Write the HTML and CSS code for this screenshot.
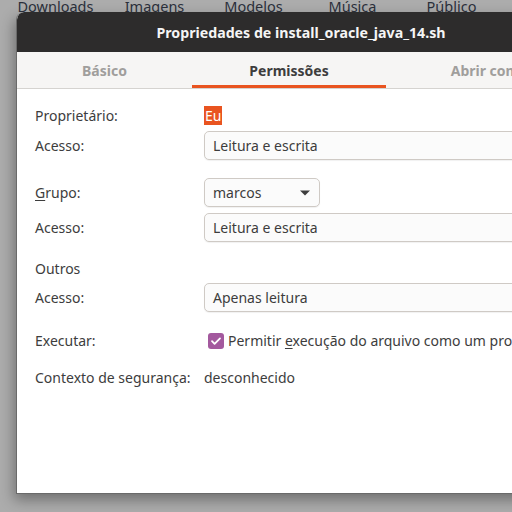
FILE: index.html
```html
<!DOCTYPE html>
<html>
<head>
<meta charset="utf-8">
<link rel="stylesheet" href="styles.css">
</head>
<body>
<div class="desktop">
  <div class="icons">
    <span>Downloads</span><span>Imagens</span><span>Modelos</span><span>Música</span><span>Público</span>
  </div>
  <div class="dialog">
    <div class="header">Propriedades de install_oracle_java_14.sh</div>
    <div class="tabs">
      <div class="tab t1">Básico</div>
      <div class="tab t2 active">Permissões</div>
      <div class="tab t3">Abrir com</div>
    </div>
    <div class="content">
      <div class="row r1"><div class="label">Proprietário:</div><div class="value"><span class="eu">Eu</span></div></div>
      <div class="row r2"><div class="label">Acesso:</div><div class="combo wide">Leitura e escrita</div></div>
      <div class="row r3"><div class="label"><u>G</u>rupo:</div><div class="combo small"><span>marcos</span><svg width="12" height="8" viewBox="0 0 12 8"><path d="M1 1.5h10L6 6.5z" fill="#3d3d3d"/></svg></div></div>
      <div class="row r4"><div class="label">Acesso:</div><div class="combo wide">Leitura e escrita</div></div>
      <div class="row r5"><div class="label">Outros</div></div>
      <div class="row r6"><div class="label">Acesso:</div><div class="combo wide">Apenas leitura</div></div>
      <div class="row r7"><div class="label">Executar:</div><div class="value check-row"><span class="check"><svg width="16" height="16" viewBox="0 0 16 16"><path d="M4 8.2l2.6 2.6L12 5.4" fill="none" stroke="#fff" stroke-width="1.8" stroke-linecap="round" stroke-linejoin="round"/></svg></span><span class="ctext">Permitir <u>e</u>xecução do arquivo como um programa</span></div></div>
      <div class="row r8"><div class="label">Contexto de segurança:</div><div class="value">desconhecido</div></div>
    </div>
  </div>
</div>
</body>
</html>
```
FILE: styles.css
```css
html, body {
  margin: 0;
  padding: 0;
  width: 512px;
  height: 512px;
  overflow: hidden;
  background: #acacac;
  font-family: "Noto Sans", "Open Sans", sans-serif;
}
.desktop {
  width: 512px;
  height: 512px;
  overflow: hidden;
}
.icons {
  display: grid;
  grid-template-columns: repeat(5, 99px);
  padding-left: 6px;
  height: 12px;
  overflow: hidden;
  font-size: 14.5px;
  color: #2a2f3a;
}
.icons span {
  text-align: center;
  line-height: 14px;
  margin-top: -1px;
  white-space: nowrap;
}
.dialog {
  margin-left: 16px;
  width: 568px;
  height: 481px;
  background: #fff;
  border-left: 1px solid #6a6a6a;
  border-bottom: 1px solid #6a6a6a;
  border-radius: 8px 8px 0 0;
  box-shadow: -2px 6px 14px rgba(0,0,0,0.35);
  color: #3d3d3d;
  overflow: hidden;
  white-space: nowrap;
}
.header {
  height: 40px;
  background: #2d2c2c;
  color: #f5f5f5;
  font-weight: bold;
  font-size: 14.2px;
  display: flex;
  align-items: center;
  justify-content: center;
  border-radius: 7px 7px 0 0;
}
.tabs {
  display: flex;
  height: 36px;
  background: #f6f5f4;
  border-bottom: 1px solid #d5d3d0;
  font-weight: bold;
  font-size: 14px;
}
.tab {
  display: flex;
  align-items: center;
  justify-content: center;
  color: #a09e9c;
  box-sizing: border-box;
  padding-top: 1px;
}
.t1 { width: 175px; }
.t2 { width: 194px; }
.t3 { width: 194px; padding-left: 4px; }
.tab.active {
  color: #3d3d3d;
  border-bottom: 3px solid #e95420;
  padding-top: 4px;
}
.content {
  padding: 17px 0 0 18px;
  font-size: 14px;
}
.row {
  display: flex;
  align-items: center;
}
.label {
  width: 169px;
  line-height: 20px;
}
.value {
  line-height: 20px;
}
.eu {
  background: #e95420;
  color: #fff;
  padding: 0 1px;
}
.combo {
  box-sizing: border-box;
  height: 29px;
  border: 1px solid #cfcac5;
  border-radius: 5px;
  background: #fbfbfb;
  box-shadow: 0 1px 1px rgba(0,0,0,0.06);
  display: flex;
  align-items: center;
  padding: 0 8px;
}
.combo.wide { width: 360px; }
.combo.small {
  width: 116px;
  justify-content: space-between;
  padding-right: 8px;
}
.r1 { height: 20px; }
.r2 { margin-top: 5px; }
.r3 { margin-top: 18px; }
.r4 { margin-top: 6px; }
.r5 { margin-top: 17px; height: 20px; }
.r6 { margin-top: 4px; }
.r7 { margin-top: 19px; height: 20px; }
.r8 { margin-top: 17px; height: 20px; }
.check-row {
  display: flex;
  align-items: center;
  margin-left: 4px;
}
.check {
  width: 16px;
  height: 16px;
  border-radius: 3px;
  background: #a3599e;
  display: flex;
  margin-right: 4px;
}
u { text-decoration-thickness: 1px; text-underline-offset: 2px; }
```
